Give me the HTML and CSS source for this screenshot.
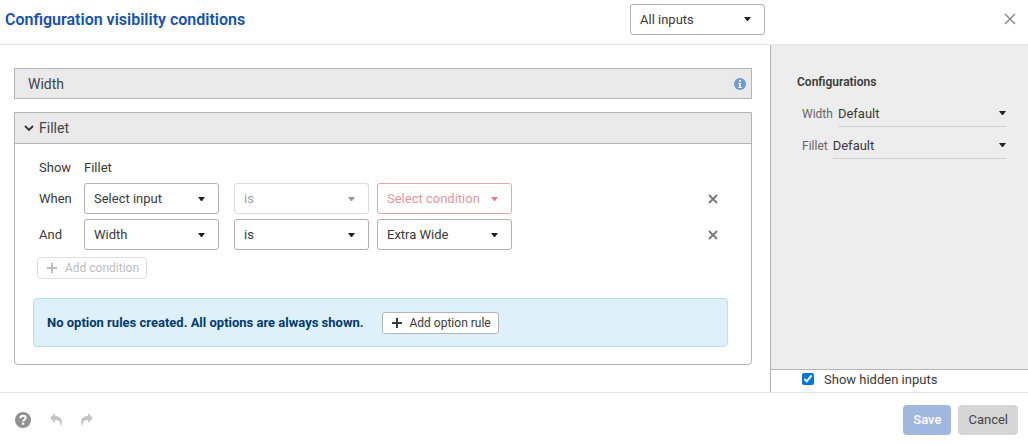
FILE: index.html
```
<!DOCTYPE html>
<html lang="en">

<head>
    <meta charset="UTF-8">
    <meta name="viewport" content="width=device-width, initial-scale=1.0">
    <title>Configuration visibility conditions</title>
    <link rel="stylesheet" href="styles.css">
</head>

<body>
    <div class="dialog">
        <header class="header">
            <h1 class="title">Configuration visibility conditions</h1>
            <select class="select" aria-label="Filter inputs">
                <option>All inputs</option>
            </select>
            <button class="icon-btn close" type="button" aria-label="Close">
                <svg width="12" height="12" viewBox="0 0 12 12"><path d="M1 1l10 10M11 1L1 11" stroke="#858585" stroke-width="1.4" fill="none"/></svg>
            </button>
        </header>

        <div class="content">
            <main class="main">
                <section class="panel panel-closed">
                    <h2 class="panel-head">Width
                        <svg class="info" width="12" height="12" viewBox="0 0 12 12"><circle cx="6" cy="6" r="6" fill="#6f9bd1"/><path d="M5 2h2v2H5zM4 5h3v4h1v1H4V9h1V6H4z" fill="#e6eef8"/></svg>
                    </h2>
                </section>

                <section class="panel">
                    <h2 class="panel-head open">
                        <svg width="10" height="7" viewBox="0 0 10 7"><path d="M1 1l4 4 4-4" stroke="#333" stroke-width="1.8" fill="none"/></svg>
                        Fillet
                    </h2>
                    <div class="panel-body">
                        <div class="row row-show">
                            <span>Show</span>
                            <span>Fillet</span>
                        </div>
                        <div class="row">
                            <span>When</span>
                            <select class="select" aria-label="Input">
                                <option>Select input</option>
                            </select>
                            <select class="select" aria-label="Operator" disabled>
                                <option>is</option>
                            </select>
                            <select class="select invalid" aria-label="Condition">
                                <option>Select condition</option>
                            </select>
                            <button class="icon-btn remove" type="button" aria-label="Remove condition">
                                <svg width="10" height="10" viewBox="0 0 10 10"><path d="M1 1l8 8M9 1L1 9" stroke="#777" stroke-width="1.8" fill="none"/></svg>
                            </button>
                        </div>
                        <div class="row">
                            <span>And</span>
                            <select class="select" aria-label="Input">
                                <option>Width</option>
                            </select>
                            <select class="select" aria-label="Operator">
                                <option>is</option>
                            </select>
                            <select class="select" aria-label="Condition">
                                <option>Extra Wide</option>
                            </select>
                            <button class="icon-btn remove" type="button" aria-label="Remove condition">
                                <svg width="10" height="10" viewBox="0 0 10 10"><path d="M1 1l8 8M9 1L1 9" stroke="#777" stroke-width="1.8" fill="none"/></svg>
                            </button>
                        </div>
                        <button class="add-btn" type="button" disabled>
                            <svg width="12" height="12" viewBox="0 0 12 12"><path d="M6 1v10M1 6h10" stroke="currentColor" stroke-width="2" fill="none"/></svg>
                            Add condition
                        </button>
                        <div class="notice">
                            <strong>No option rules created. All options are always shown.</strong>
                            <button class="add-btn" type="button">
                                <svg width="12" height="12" viewBox="0 0 12 12"><path d="M6 1v10M1 6h10" stroke="currentColor" stroke-width="2" fill="none"/></svg>
                                Add option rule
                            </button>
                        </div>
                    </div>
                </section>
            </main>

            <aside class="side">
                <div class="configs">
                    <h2 class="configs-title">Configurations</h2>
                    <div class="field">
                        <label for="cfg-width">Width</label>
                        <select id="cfg-width" class="select-line">
                            <option>Default</option>
                        </select>
                    </div>
                    <div class="field">
                        <label for="cfg-fillet">Fillet</label>
                        <select id="cfg-fillet" class="select-line">
                            <option>Default</option>
                        </select>
                    </div>
                </div>
                <label class="hidden-toggle">
                    <input type="checkbox" checked>
                    Show hidden inputs
                </label>
            </aside>
        </div>

        <footer class="footer">
            <button class="icon-btn" type="button" aria-label="Help">
                <svg width="16" height="16" viewBox="0 0 16 16"><circle cx="8" cy="8" r="8" fill="#919191"/><path d="M5.3 6.3C5.3 4.5 6.5 3.7 8 3.7s2.7.8 2.7 2.3c0 1.7-2.6 1.8-2.6 3.6" stroke="#fff" stroke-width="2" fill="none"/><rect x="7" y="10.6" width="2.2" height="2.2" fill="#fff"/></svg>
            </button>
            <button class="icon-btn" type="button" aria-label="Undo" disabled>
                <svg width="12" height="13" viewBox="0 0 12 13"><path d="M5 0v3c4.500 0 7 2.500 7 6 0 1.500-.5 3-1.500 4C10.500 9 9 7 5 7v3L0 5z" fill="#c6c6c6"/></svg>
            </button>
            <button class="icon-btn" type="button" aria-label="Redo" disabled>
                <svg width="12" height="13" viewBox="0 0 12 13"><path d="M7 0v3C2.500 3 0 5.500 0 9c0 1.500.5 3 1.500 4C1.500 9 3 7 7 7v3l5-5z" fill="#c6c6c6"/></svg>
            </button>
            <div class="actions">
                <button class="btn btn-save" type="button" disabled>Save</button>
                <button class="btn" type="button">Cancel</button>
            </div>
        </footer>
    </div>
</body>

</html>
```
FILE: styles.css
```
* {
    box-sizing: border-box;
    margin: 0;
    padding: 0;
}

body,
button,
select,
input {
    font-family: Roboto, "Liberation Sans", sans-serif;
    font-size: 13px;
    color: #3a3a3a;
}

.dialog {
    display: flex;
    flex-direction: column;
    min-height: 100vh;
    background-color: white;
    border-bottom: 1px solid #858585;
}

/* header */
.header {
    display: grid;
    grid-template-columns: 1fr 135px 263px;
    align-items: center;
    height: 45px;
    padding-bottom: 6px;
    border-bottom: 1px solid #e6e6e6;
}

.title {
    padding-left: 5px;
    font-size: 16px;
    font-weight: 600;
    color: #1651b0;
}

.icon-btn {
    display: flex;
    border: none;
    background: none;
}

.close {
    justify-self: end;
    margin-right: 12px;
}

/* drop-downs */
.select,
.select-line {
    appearance: none;
    background: url("data:image/svg+xml,%3Csvg xmlns='http://www.w3.org/2000/svg' width='7' height='4'%3E%3Cpath d='M0 0h7L4 4H3z' fill='%23222'/%3E%3C/svg%3E") no-repeat right 13px center;
}

.select {
    width: 135px;
    height: 31px;
    padding: 0 24px 0 9px;
    border: 1px solid #b0b0b0;
    border-radius: 3px;
}

.select:disabled {
    border-color: #dcdcdc;
    color: #a0a0a0;
    opacity: 1;
    background-image: url("data:image/svg+xml,%3Csvg xmlns='http://www.w3.org/2000/svg' width='7' height='4'%3E%3Cpath d='M0 0h7L4 4H3z' fill='%23999'/%3E%3C/svg%3E");
}

.select.invalid {
    border-color: #eda3aa;
    color: #e1969e;
    background-image: url("data:image/svg+xml,%3Csvg xmlns='http://www.w3.org/2000/svg' width='7' height='4'%3E%3Cpath d='M0 0h7L4 4H3z' fill='%23e0808a'/%3E%3C/svg%3E");
}

/* content */
.content {
    display: flex;
    flex: 1;
}

.main {
    flex: 1;
    padding: 23px 18px 27px 14px;
}

.panel {
    border: 1px solid #b5b5b5;
    border-radius: 0 0 4px 4px;
}

.panel-closed {
    margin-bottom: 13px;
    border-radius: 0;
}

.panel-head {
    display: flex;
    align-items: center;
    height: 29px;
    padding: 0 5px 0 13px;
    background-color: #eaeaea;
    font-size: 14px;
    font-weight: 400;
    color: #444;
}

.panel-head.open {
    gap: 5px;
    height: 31px;
    padding-left: 9px;
    border-bottom: 1px solid #b5b5b5;
}

.info {
    margin-left: auto;
}

.panel-body {
    padding: 12px 23px 17px 18px;
}

.row {
    display: grid;
    grid-template-columns: 45px 150px 143px 135px 1fr;
    align-items: center;
    margin-bottom: 5px;
    padding-left: 6px;
}

.row-show {
    height: 22px;
}

.remove {
    justify-self: end;
    margin-right: 10px;
}

.add-btn {
    display: flex;
    align-items: center;
    gap: 7px;
    height: 22px;
    padding: 0 7px 0 8px;
    border: 1px solid #b5b5b5;
    border-radius: 3px;
    background-color: white;
    font-size: 12px;
}

.add-btn:disabled {
    margin: 7px 0 0 4px;
    border-color: #dedede;
    color: #bdbdbd;
}

.notice {
    display: flex;
    align-items: center;
    gap: 18px;
    min-height: 49px;
    margin-top: 19px;
    padding: 0 13px;
    border: 1px solid #b9def2;
    border-radius: 4px;
    background-color: #def0fa;
    color: #003a70;
}

/* side */
.side {
    display: flex;
    flex-direction: column;
    width: 258px;
    border-left: 1px solid #b5b5b5;
}

.configs {
    flex: 1;
    padding: 29px 22px 0 26px;
    background-color: #ededed;
}

.configs-title {
    height: 16px;
    margin-bottom: 10px;
    font-size: 12px;
    font-weight: 600;
    line-height: 16px;
}

.field {
    display: flex;
    align-items: center;
    gap: 5px;
    height: 27px;
    margin-bottom: 5px;
    padding-left: 5px;
}

.field label {
    font-size: 12px;
    color: #666;
}

.select-line {
    flex: 1;
    height: 27px;
    border: none;
    border-bottom: 1px solid #d0d0d0;
    background-position: right 0 center;
}

.hidden-toggle {
    display: flex;
    align-items: center;
    gap: 10px;
    height: 23px;
    padding: 0 0 4px 31px;
    border-top: 1px solid #b5b5b5;
}

.hidden-toggle input {
    width: 12px;
    height: 12px;
    accent-color: #0075d8;
}

/* footer */
.footer {
    display: flex;
    align-items: center;
    gap: 19px;
    height: 52px;
    padding: 2px 10px 0 15px;
    border-top: 1px solid #e6e6e6;
}

.actions {
    display: flex;
    gap: 7px;
    margin-left: auto;
}

.btn {
    height: 30px;
    padding: 0 10px;
    border: none;
    border-radius: 4px;
    background-color: #d6d6d6;
    color: #444;
}

.btn-save {
    background-color: #a0b8e0;
    font-weight: 500;
    color: white;
}
```
